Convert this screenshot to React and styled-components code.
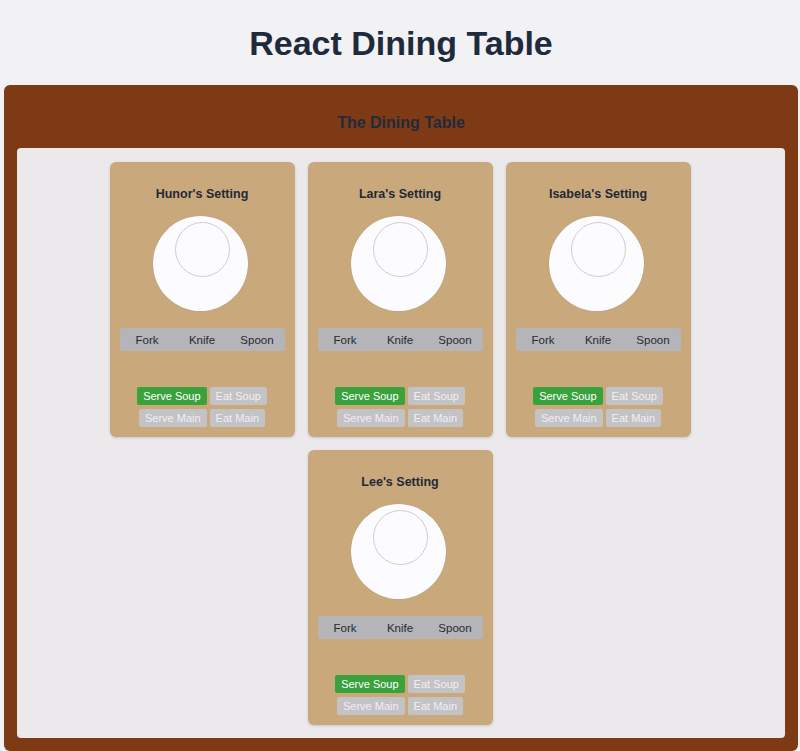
import React from 'react'
import styled, { createGlobalStyle } from 'styled-components'

const GlobalStyle = createGlobalStyle`
    html, body {
        margin: 0;
        padding: 0;
        background: #f2f1f4;
        font-family: "Liberation Sans", Arial, sans-serif;
    }
    * { box-sizing: border-box; }
`

const diners = ["Hunor", "Lara", "Isabela", "Lee"]

export default function App() {
    return (
        <Page>
            <GlobalStyle />
            <Heading>React Dining Table</Heading>
            <Table>
                <TableTitle>The Dining Table</TableTitle>
                <TableTop>
                    {diners.map((name) => (
                        <Setting key={name} name={name} />
                    ))}
                </TableTop>
            </Table>
        </Page>
    )
}

function Setting({ name }) {
    return (
        <Card>
            <CardTitle>{name}'s Setting</CardTitle>
            <Plate>
                <InnerPlate />
            </Plate>
            <Cutlery>
                <Utensil>Fork</Utensil>
                <Utensil>Knife</Utensil>
                <Utensil>Spoon</Utensil>
            </Cutlery>
            <Actions>
                <ActionRow>
                    <ActionButton $active>Serve Soup</ActionButton>
                    <ActionButton>Eat Soup</ActionButton>
                </ActionRow>
                <ActionRow>
                    <ActionButton>Serve Main</ActionButton>
                    <ActionButton>Eat Main</ActionButton>
                </ActionRow>
            </Actions>
        </Card>
    )
}

const Page = styled.div`
    padding: 0 2px 0 4px;
    min-height: 751px;
`

const Heading = styled.h1`
    margin: 0;
    padding: 22px 0 21px;
    text-align: center;
    font-size: 34px;
    line-height: 42px;
    font-weight: 700;
    color: #1e2b3c;
`

const Table = styled.section`
    background: #7e3a14;
    border-radius: 6px;
    padding: 29px 13px 13px 13px;
    min-height: 666px;
`

const TableTitle = styled.h2`
    margin: 0 0 16px;
    text-align: center;
    font-size: 16px;
    line-height: 18px;
    font-weight: 700;
    color: #1e2b3c;
`

const TableTop = styled.div`
    background: #ebe9ec;
    border-radius: 4px;
    padding: 14px 2px 13px 0;
    display: flex;
    flex-wrap: wrap;
    justify-content: center;
    gap: 13px;
`

const Card = styled.div`
    width: 185px;
    height: 275px;
    background: #c9a87c;
    border-radius: 6px;
    box-shadow: 0 1px 3px rgba(0, 0, 0, 0.15);
    padding: 24px 10px 10px;
    display: flex;
    flex-direction: column;
    align-items: center;
`

const CardTitle = styled.h3`
    margin: 0 0 14px;
    font-size: 12.5px;
    line-height: 16px;
    font-weight: 700;
    color: #1f2937;
`

const Plate = styled.div`
    width: 95px;
    height: 95px;
    margin-right: 4px;
    border-radius: 50%;
    background: #fcfbfd;
    box-shadow: 0 0 1px rgba(0, 0, 0, 0.2);
    display: flex;
    justify-content: center;
    padding: 6px 0 0 4px;
    flex-shrink: 0;
`

const InnerPlate = styled.div`
    width: 55px;
    height: 55px;
    border-radius: 50%;
    border: 1px solid #cfcdd0;
`

const Cutlery = styled.div`
    margin-top: 17px;
    width: 165px;
    height: 23px;
    background: #b5b4b8;
    border-radius: 2px;
    display: grid;
    grid-template-columns: repeat(3, 1fr);
    align-items: center;
`

const Utensil = styled.span`
    text-align: center;
    font-size: 11.5px;
    color: #262b35;
`

const Actions = styled.div`
    margin-top: auto;
    display: flex;
    flex-direction: column;
    align-items: center;
    gap: 4px;
`

const ActionRow = styled.div`
    display: flex;
    gap: 3px;
`

const ActionButton = styled.button`
    height: 18px;
    padding: 0 6px;
    border: none;
    border-radius: 2px;
    font-family: inherit;
    font-size: 11px;
    color: ${(p) => (p.$active ? '#ffffff' : '#f1f0f2')};
    background: ${(p) => (p.$active ? '#39a23d' : '#c3c2c4')};
    cursor: pointer;
`
